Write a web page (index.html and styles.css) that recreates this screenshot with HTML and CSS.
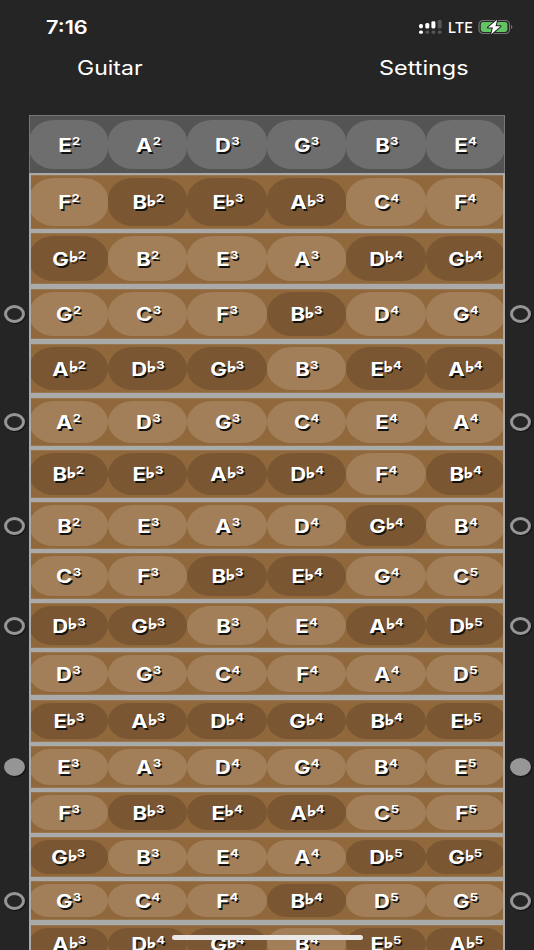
FILE: index.html
```html
<!DOCTYPE html>
<html lang="en">
<head>
<meta charset="utf-8">
<title>Guitar Fretboard</title>
<link rel="stylesheet" href="styles.css">
</head>
<body>
<div class="status">
  <span class="time">7:16</span>
  <div class="indicators">
    <svg class="signal" viewBox="0 0 24 14" width="24" height="14">
      <g fill="#fff"><rect x="0" y="4" width="4" height="4.4" rx="1.8"/><rect x="6.3" y="3" width="4" height="5.4" rx="1.5"/><rect x="12.4" y="1.3" width="4" height="7.1" rx="1.4"/><rect x="0" y="10.4" width="4" height="3.4" rx="1.6"/></g>
      <g fill="#555"><rect x="18.7" y="0" width="4" height="8.4" rx="1.3"/><rect x="6.3" y="10.4" width="4" height="3.4" rx="1.5"/><rect x="12.4" y="10.4" width="4" height="3.4" rx="1.5"/><rect x="18.7" y="10.4" width="4" height="3.4" rx="1.5"/></g>
    </svg>
    <span class="network">LTE</span>
    <svg class="battery" viewBox="0 0 36 16" width="36" height="16">
      <rect x="1" y="1.5" width="30.5" height="13" rx="4" fill="none" stroke="#747474" stroke-width="1.2"/>
      <rect x="2.8" y="3.1" width="26.6" height="9.8" rx="2.4" fill="#62c462"/>
      <path d="M33 6v4q1.4-.5 1.4-2T33 6z" fill="#747474"/>
      <path d="M19.2.8 10 8.5h5L13.2 15.3 22.5 7.3h-5z" fill="#fff" stroke="#252525" stroke-width="2" paint-order="stroke" stroke-linejoin="round"/>
    </svg>
  </div>
</div>
<nav class="nav">
  <span class="nav-item">Guitar</span>
  <span class="nav-item nav-right">Settings</span>
</nav>
<main class="fretboard" id="fretboard"></main>
<div class="home-indicator"></div>
<script src="script.js"></script>
</body>
</html>
```
FILE: styles.css
```css
* { box-sizing: border-box; }
body {
  margin: 0;
  height: 950px;
  overflow: hidden;
  position: relative;
  background: #252525;
  color: #fff;
  font-family: Inter, "Liberation Sans", sans-serif;
}
.status {
  height: 54px;
  padding: 0 20px 0 46px;
  display: flex;
  justify-content: space-between;
  align-items: center;
}
.time {
  font-size: 18.4px;
  font-weight: 600;
  line-height: 24px;
  transform: scaleX(1.18);
  transform-origin: left;
}
.indicators { display: flex; align-items: center; height: 16px; }
.network {
  width: 25px;
  margin: 2px 5px 0;
  font-size: 15px;
  font-weight: 500;
  line-height: 16px;
  transform: scaleX(.96);
  transform-origin: left;
}
.nav {
  height: 61px;
  padding: 1px 65.5px 0 77px;
  display: flex;
  justify-content: space-between;
}
.nav-item {
  font-size: 20px;
  line-height: 26px;
  transform: scaleX(1.15);
  transform-origin: left;
}
.nav-right { transform: scaleX(1.17); transform-origin: right; }
.fret-row { display: grid; grid-template-columns: 28.5px 476.5px 29px; }
.cells {
  display: grid;
  grid-template-columns: repeat(6, 79.4px);
  justify-content: center;
  overflow: hidden;
  padding: 3px 0;
  background: #90683b;
  border: solid #aaa;
  border-width: 0 2px 0 2px;
  box-shadow: inset 0 1px #96774f, inset 0 -1px #96774f;
}
.open .cells {
  padding: 4px 0;
  background: #545454;
  border: solid #777;
  border-width: 1px 1px 0 1px;
  box-shadow: none;
}
.fret {
  grid-column: 2;
  background: #aaa;
}
.note {
  display: flex;
  align-items: center;
  justify-content: center;
  border-radius: 25px / 21px;
  background: #a27f59;
}
.note.flat { background: #7a5632; }
.open .note { background: #6e6e6e; }
.label {
  display: flex;
  align-items: center;
  margin-left: 1px;
  font-size: 18.5px;
  font-weight: 700;
  line-height: 24px;
  text-shadow: 1.2px 1.5px 0 #111;
  transform: scaleX(1.19);
}
.accidental {
  width: 7.3px;
  margin: -3px 0 0 0;
  font-family: "DejaVu Sans", sans-serif;
  font-size: 14.5px;
  font-weight: 700;
  -webkit-text-stroke: .9px #fff;
  transform: scaleX(1.15);
  transform-origin: left;
}
.octave { font-size: 11px; margin: -8px 0 0 .3px; }
.marker {
  align-self: center;
  justify-self: center;
  width: 21px;
  height: 18px;
  border: 3px solid #969696;
  border-radius: 50%;
  box-shadow: 1px 1px 1px #111;
}
.marker.solid { background: #969696; }
.marker.left { grid-column: 1; }
.marker.right { grid-column: 3; margin-left: 1px; }
.home-indicator {
  position: absolute;
  left: 172px;
  top: 935px;
  width: 191px;
  height: 5px;
  border-radius: 3px;
  background: #e9e8e6;
}
```
FILE: script.js
```js
const names = ["C", "D♭", "D", "E♭", "E", "F", "G♭", "G", "A♭", "A", "B♭", "B"];
const tuning = [28, 33, 38, 43, 47, 52];
// [row height, thickness of the fret wire below]
const rows = [[58, 2], [54, 4], [51, 5], [50, 5], [49, 5], [48, 4], [48, 4], [47, 4], [46, 4],
  [45, 4], [43, 5], [42, 4], [42, 4], [41, 4], [40, 4], [39, 5], [38, 4]];
const inlays = { 3: "ring", 5: "ring", 7: "ring", 9: "ring", 12: "solid", 15: "ring" };

function note(pitch) {
  const name = names[pitch % 12];
  const flat = name.length > 1;
  const accidental = flat ? '<span class="accidental">♭</span>' : "";
  return `<div class="note ${flat ? "flat" : ""}"><span class="label">${name[0]}${accidental}` +
    `<span class="octave">${Math.floor(pitch / 12)}</span></span></div>`;
}

function marker(fret, side) {
  return inlays[fret] ? `<i class="marker ${side} ${inlays[fret]}"></i>` : "<i></i>";
}

document.getElementById("fretboard").innerHTML = rows.map(([height, wire], fret) =>
  `<div class="fret-row ${fret ? "" : "open"}" style="grid-template-rows:${height}px ${wire}px">` +
  marker(fret, "left") +
  `<div class="cells">${tuning.map(open => note(open + fret)).join("")}</div>` +
  marker(fret, "right") +
  '<div class="fret"></div></div>').join("");
```
